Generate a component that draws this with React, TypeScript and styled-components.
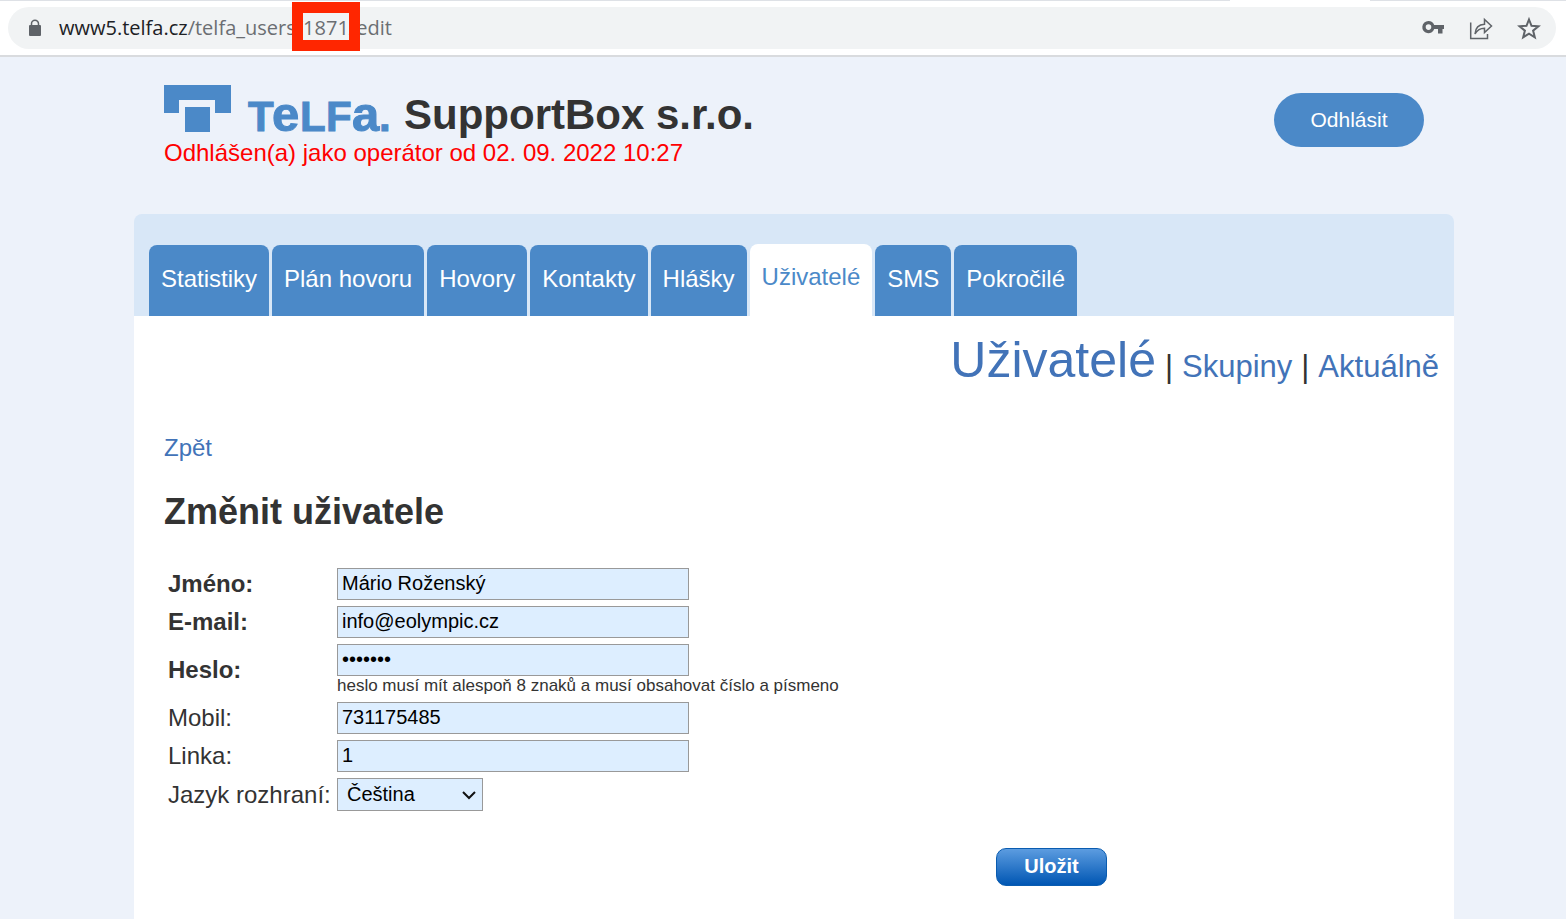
import React from 'react';
import styled, { createGlobalStyle } from 'styled-components';

const GlobalStyle = createGlobalStyle`
  *, *::before, *::after { box-sizing: border-box; }
  body {
    margin: 0;
    background: #edf2fa;
    color: #333;
    font-family: "Liberation Sans", Arial, sans-serif;
    font-size: 24px;
    line-height: 28px;
  }
  a { text-decoration: none; }
`;

const Page = styled.div`
  display: flex;
  flex-direction: column;
  min-height: 100vh;
`;

const BrowserBar = styled.header`
  position: relative;
  padding: 6px 10px 6px 8px;
  background: #fff;
  border-top: 1px solid #dee1e6;
  border-bottom: 2px solid #d9dbde;
`;

const ActiveTabEdge = styled.span`
  position: absolute;
  top: -1px;
  right: 196px;
  width: 140px;
  height: 1px;
  background: #fff;
`;

const AddressBar = styled.div`
  display: flex;
  align-items: center;
  height: 42px;
  padding: 0 14px 0 18px;
  border-radius: 21px;
  background: #f1f3f4;
`;

const Address = styled.span`
  flex: 1;
  margin-left: 15px;
  color: #6b6e72;
  font: 20px/28px "Open Sans", "Noto Sans", sans-serif;
`;

const Host = styled.span`
  color: #202124;
`;

const MarkedId = styled.span`
  position: relative;

  &::after {
    content: "";
    position: absolute;
    inset: -12px -11px -10px;
    border: 11px solid #ff2600;
  }
`;

const Actions = styled.div`
  display: flex;
  gap: 22px;
`;

const IconButton = styled.button`
  display: flex;
  padding: 0;
  border: 0;
  background: none;
  color: #5f6368;
`;

const Shell = styled.div`
  display: flex;
  flex: 1;
  flex-direction: column;
  padding: 0 112px 0 134px;
`;

const Masthead = styled.div`
  display: flex;
  justify-content: space-between;
  align-items: flex-start;
  height: 157px;
  padding: 28px 30px 0;
`;

const Brand = styled.div`
  display: flex;
  align-items: flex-start;
  gap: 12px;
  height: 54px;
`;

const Company = styled.h1`
  margin: 0;
  padding-top: 6px;
  font-size: 42px;
  line-height: 48px;
`;

const Status = styled.p`
  margin: 0;
  color: #f00;
`;

const LogoutButton = styled.button`
  width: 150px;
  height: 54px;
  margin-top: 8px;
  border: 0;
  border-radius: 27px;
  background: #4b89c8;
  color: #fff;
  font: 21px "Liberation Sans", Arial, sans-serif;
`;

const TabStrip = styled.nav`
  display: flex;
  align-items: flex-end;
  gap: 3px;
  height: 102px;
  padding: 0 15px;
  border-radius: 8px 8px 0 0;
  background: #d8e7f7;
`;

const Tab = styled.a<{ $active?: boolean }>`
  height: ${(p) => (p.$active ? 72 : 71)}px;
  padding: ${(p) => (p.$active ? 19 : 20)}px 12px 0;
  border-radius: 8px 8px 0 0;
  background: ${(p) => (p.$active ? '#fff' : '#4b89c8')};
  color: ${(p) => (p.$active ? '#4b89c8' : '#fff')};
  white-space: nowrap;
`;

const Content = styled.main`
  flex: 1;
  padding: 15px 15px 33px 30px;
  background: #fff;
`;

const SubNav = styled.nav`
  display: flex;
  justify-content: flex-end;
  align-items: baseline;
  gap: 9px;
  font-size: 31px;
  line-height: 58px;
`;

const SubLink = styled.a<{ $current?: boolean }>`
  color: #4273b8;
  font-size: ${(p) => (p.$current ? 50 : 31)}px;
`;

const BackLink = styled.a`
  display: inline-block;
  margin-top: 38px;
  color: #4273b8;
`;

const Title = styled.h2`
  margin: 30px 0 36px;
  font-size: 36px;
  line-height: 40px;
`;

const Fields = styled.div`
  display: grid;
  grid-template-columns: 165px 1fr;
  gap: 6px 4px;
  align-items: center;
  padding-left: 4px;
`;

const Label = styled.label<{ $required?: boolean }>`
  font-weight: ${(p) => (p.$required ? 700 : 400)};
  white-space: nowrap;
`;

const Input = styled.input`
  display: block;
  width: 352px;
  height: 32px;
  padding: 0 4px 2px;
  border: 1px solid #999;
  border-radius: 0;
  background: #def;
  color: #000;
  font: 20px "Liberation Sans", Arial, sans-serif;
`;

const Hint = styled.p`
  margin: 0;
  font-size: 17px;
  line-height: 20px;
`;

const SelectBox = styled.div`
  display: grid;
  width: 146px;
  align-items: center;

  & > * { grid-area: 1 / 1; }
  & > svg { justify-self: end; margin-right: 6px; pointer-events: none; }
`;

const Select = styled.select`
  appearance: none;
  width: 100%;
  height: 33px;
  padding: 0 28px 2px 9px;
  border: 1px solid #999;
  border-radius: 0;
  background: #def;
  color: #000;
  font: 20px "Liberation Sans", Arial, sans-serif;
`;

const FormFooter = styled.div`
  display: flex;
  justify-content: flex-end;
  padding: 37px 332px 0 0;
`;

const SaveButton = styled.button`
  width: 111px;
  height: 38px;
  padding: 0 0 2px;
  border: 1px solid #0a5cb0;
  border-radius: 10px;
  background: linear-gradient(#5c9ce0, #0056b3);
  color: #fff;
  font: bold 20px "Liberation Sans", Arial, sans-serif;
`;

const LockIcon = () => (
  <svg width="18" height="18" viewBox="0 0 18 18" fill="#5f6368" aria-hidden="true">
    <path d="M4 6h10a1 1 0 0 1 1 1v9a1 1 0 0 1-1 1H4a1 1 0 0 1-1-1V7a1 1 0 0 1 1-1z" />
    <path d="M5.5 7V4.800a3.500 3.500 0 0 1 7 0V7" fill="none" stroke="#5f6368" strokeWidth="1.500" />
  </svg>
);

const KeyIcon = () => (
  <svg width="26" height="26" viewBox="0 0 26 26" fill="currentColor" aria-hidden="true">
    <path
      fillRule="evenodd"
      d="M8.500 6a6.100 6.100 0 0 1 5.700 4H24v4h-1.500v4.500H18V14h-3.800a6.100 6.100 0 1 1-5.700-8zm0 3.300a2.800 2.800 0 1 0 0 5.600 2.800 2.800 0 0 0 0-5.600z"
    />
  </svg>
);

const ShareIcon = () => (
  <svg width="26" height="26" viewBox="0 0 26 26" fill="none" stroke="currentColor" strokeWidth="1.500" aria-hidden="true">
    <path d="M2.700 7.500v16h16.800V19" />
    <path d="M7 19c.4-6.200 3.600-9.500 9.500-9.700V4.500l7 6.500-7 6.500v-4.300c-4.500 0-7.400 2-9.500 5.800z" />
  </svg>
);

const StarIcon = () => (
  <svg width="26" height="26" viewBox="0 0 26 26" fill="none" stroke="currentColor" strokeWidth="2" aria-hidden="true">
    <path d="M13 4.500l2.500 6.300 6.900.5-5.300 4.300 1.700 6.700-5.800-3.700-5.800 3.700 1.700-6.700-5.300-4.300 6.900-.5z" />
  </svg>
);

const ChevronIcon = () => (
  <svg width="16" height="16" viewBox="0 0 16 16" fill="none" stroke="#111" strokeWidth="2" aria-hidden="true">
    <path d="M2 5l6 6 6-6" />
  </svg>
);

const Logo = () => (
  <svg
    width="228"
    height="60"
    viewBox="0 0 228 60"
    fill="#4b89c8"
    fontFamily='"Liberation Sans", Arial, sans-serif'
    fontWeight="700"
    role="img"
    aria-label="Telfa"
  >
    <path d="M0 0h67v28H51V15H15v13H0z" />
    <path d="M21 22h25v25H21z" />
    <g stroke="#4b89c8" strokeWidth="1">
      <text y="46" fontSize="42">
        <tspan x="84">T</tspan>
        <tspan x="136">L</tspan>
        <tspan x="162">F</tspan>
        <tspan x="215">.</tspan>
      </text>
      <text y="46" fontSize="49">
        <tspan x="108">e</tspan>
        <tspan x="188">a</tspan>
      </text>
    </g>
  </svg>
);

const tabs = ['Statistiky', 'Plán hovoru', 'Hovory', 'Kontakty', 'Hlášky', 'Uživatelé', 'SMS', 'Pokročilé'];

export default function App() {
  return (
    <>
      <GlobalStyle />
      <Page>
        <BrowserBar>
          <ActiveTabEdge />
          <AddressBar>
            <LockIcon />
            <Address>
              <Host>www5.telfa.cz</Host>/telfa_users/<MarkedId>1871</MarkedId>/edit
            </Address>
            <Actions>
              <IconButton aria-label="Hesla"><KeyIcon /></IconButton>
              <IconButton aria-label="Sdílet"><ShareIcon /></IconButton>
              <IconButton aria-label="Přidat záložku"><StarIcon /></IconButton>
            </Actions>
          </AddressBar>
        </BrowserBar>
        <Shell>
          <Masthead>
            <div>
              <Brand>
                <Logo />
                <Company>SupportBox s.r.o.</Company>
              </Brand>
              <Status>Odhlášen(a) jako operátor od 02. 09. 2022 10:27</Status>
            </div>
            <LogoutButton>Odhlásit</LogoutButton>
          </Masthead>
          <TabStrip>
            {tabs.map((name) => (
              <Tab key={name} href="#" $active={name === 'Uživatelé'}>{name}</Tab>
            ))}
          </TabStrip>
          <Content>
            <SubNav>
              <SubLink href="#" $current>Uživatelé</SubLink>
              <span>|</span>
              <SubLink href="#">Skupiny</SubLink>
              <span>|</span>
              <SubLink href="#">Aktuálně</SubLink>
            </SubNav>
            <BackLink href="#">Zpět</BackLink>
            <Title>Změnit uživatele</Title>
            <form onSubmit={(e) => e.preventDefault()}>
              <Fields>
                <Label $required htmlFor="name">Jméno:</Label>
                <Input id="name" defaultValue="Mário Roženský" />
                <Label $required htmlFor="email">E-mail:</Label>
                <Input id="email" type="email" defaultValue="info@eolympic.cz" />
                <Label $required htmlFor="password">Heslo:</Label>
                <div>
                  <Input id="password" type="password" defaultValue="abcdefg" />
                  <Hint>heslo musí mít alespoň 8 znaků a musí obsahovat číslo a písmeno</Hint>
                </div>
                <Label htmlFor="mobile">Mobil:</Label>
                <Input id="mobile" type="tel" defaultValue="731175485" />
                <Label htmlFor="line">Linka:</Label>
                <Input id="line" defaultValue="1" />
                <Label htmlFor="language">Jazyk rozhraní:</Label>
                <SelectBox>
                  <Select id="language" defaultValue="cs">
                    <option value="cs">Čeština</option>
                  </Select>
                  <ChevronIcon />
                </SelectBox>
              </Fields>
              <FormFooter>
                <SaveButton type="submit">Uložit</SaveButton>
              </FormFooter>
            </form>
          </Content>
        </Shell>
      </Page>
    </>
  );
}
